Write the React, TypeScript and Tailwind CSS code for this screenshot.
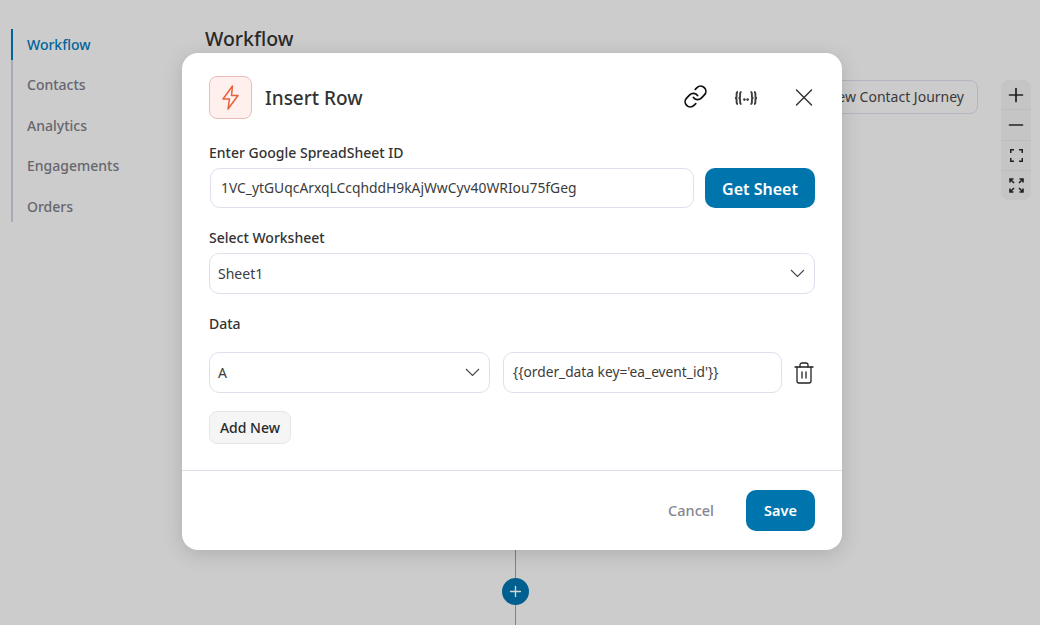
import React from "react";
import { Link, Minus, Plus, Trash2, X } from "lucide-react";

const font = { fontFamily: '"Noto Sans", "Open Sans", sans-serif' };

function Expand() {
  return (
    <svg width="13" height="13" viewBox="0 0 13 13" fill="none" stroke="#222" strokeWidth="1.5">
      <path d="M.75 4V.75H4M12.25 4V.75H9M.75 9v3.25H4M12.25 9v3.25H9" />
    </svg>
  );
}
function Collapse() {
  return (
    <svg width="15" height="15" viewBox="0 0 15 15" fill="none" stroke="#222" strokeWidth="1.6">
      <path d="M1 1l4 4M1 4.5V1h3.5M14 1l-4 4M10.5 1H14v3.5M1 14l4-4M1 10.5V14h3.5M14 14l-4-4M10.5 14H14v-3.5" />
    </svg>
  );
}
function Bolt() {
  return (
    <svg width="17" height="25" viewBox="0 0 17 25" fill="none" stroke="#e8603c" strokeWidth="1.5" strokeLinejoin="round">
      <path d="M10.5 1 1 14h6.5L6 24l10-13.5H9.5Z" />
    </svg>
  );
}
function Chevron() {
  return (
    <svg width="15" height="9" viewBox="0 0 15 9" fill="none" stroke="#444" strokeWidth="1.1">
      <path d="M1 1l6.5 6.5L14 1" />
    </svg>
  );
}
function VariableIcon() {
  return (
    <svg width="24" height="14" viewBox="0 0 24 14" fill="none" stroke="#3c3c3c" strokeWidth="1.9" className="ml-[25px] mr-[1px]">
      <path d="M4 1C2.6 1 2.6 2 2.6 3v2.5C2.6 6.5 1.8 7 1 7c.8 0 1.6.5 1.6 1.5V11c0 1 0 2 1.4 2" />
      <path d="M7.5 1C6.1 1 6.1 2 6.1 3v2.5c0 1-.8 1.5-1.6 1.5.8 0 1.6.5 1.6 1.5V11c0 1 0 2 1.4 2" />
      <path d="M20 1c1.4 0 1.4 1 1.4 2v2.5c0 1 .8 1.5 1.6 1.5-.8 0-1.6.5-1.6 1.5V11c0 1 0 2-1.4 2" />
      <path d="M16.5 1c1.4 0 1.4 1 1.4 2v2.5c0 1 .8 1.5 1.6 1.5-.8 0-1.6.5-1.6 1.5V11c0 1 0 2-1.4 2" />
      <circle cx="10.4" cy="8.6" r="1.3" fill="#3c3c3c" stroke="none" />
      <circle cx="13.6" cy="8.6" r="1.3" fill="#3c3c3c" stroke="none" />
    </svg>
  );
}

function Select({ label, className }: { label: string; className: string }) {
  return (
    <div className={`flex h-[41px] shrink-0 items-center justify-between rounded-[10px] border border-[#e0dfee] bg-white pl-2 pr-[9px] text-sm text-[#3c3c3c] ${className}`}>
      <span>{label}</span>
      <Chevron />
    </div>
  );
}

const nav = ["Contacts", "Analytics", "Engagements", "Orders"];

export default function App() {
  return (
    <div style={font} className="relative h-[625px] w-[1040px] overflow-hidden bg-[#cccccc]">
      <div className="flex h-full">
        <aside className="w-[205px] pl-[11px] pt-[29px]">
          <ul className="h-[193px] border-l-2 border-[#a9a9b3]">
            <li className="-ml-[2px] mb-[5px] flex h-[31px] items-center border-l-2 border-[#00649a] pl-[14px] text-sm font-medium text-[#00649a]">
              Workflow
            </li>
            {nav.map((n) => (
              <li key={n} className="flex h-[40.5px] items-center pl-[14px] text-sm font-medium text-[#66666f]">
                {n}
              </li>
            ))}
          </ul>
        </aside>
        <main className="relative flex-1 pt-[26px]">
          <h1 className="text-[19.5px] leading-[26px] font-medium text-[#2a2a2a]">Workflow</h1>
          <div className="mr-[62px] mt-[28px] flex justify-end">
            <button className="h-[34px] rounded-lg border border-[#b5b5c0] px-[13px] text-sm text-[#3a3a3a]">
              Create New Contact Journey
            </button>
          </div>
          <div className="absolute left-[796px] top-[80px] flex w-[30px] flex-col divide-y divide-[#bdbdbd] rounded-lg bg-[#c5c5c5]">
            <div className="flex h-[30px] items-center justify-center"><Plus size={22} color="#222" strokeWidth={1.9} /></div>
            <div className="flex h-[31px] items-center justify-center"><Minus size={22} color="#222" strokeWidth={1.9} /></div>
            <div className="flex h-[30px] items-center justify-center"><Expand /></div>
            <div className="flex h-[29px] items-center justify-center"><Collapse /></div>
          </div>
          <div className="absolute left-[310px] top-[540px] h-[85px] w-px bg-[#808080]" />
          <div className="absolute left-[296.5px] top-[578px] flex h-[27px] w-[27px] items-center justify-center rounded-full bg-[#005f8e]">
            <Plus size={17} color="#d6d6d6" strokeWidth={1.9} />
          </div>
        </main>
      </div>

      <div className="absolute left-[182px] top-[53px] w-[660px] rounded-[16px] bg-white shadow-[0_4px_20px_rgba(0,0,0,0.15)]">
        <div className="px-[27px] pt-[23px]">
          <div className="flex h-[43px] items-center">
            <div className="flex h-[43px] w-[43px] items-center justify-center rounded-lg border border-[#e8bdb8] bg-[#fff0ee]">
              <Bolt />
            </div>
            <div className="ml-[13px] mt-[2px] text-[19px] font-medium text-[#333]">Insert Row</div>
            <div className="ml-auto flex items-center">
              <Link size={25} color="#111" strokeWidth={1.7} className="-translate-x-px -translate-y-px" />
              <VariableIcon />
              <X size={30} color="#333" strokeWidth={1.1} className="-mr-[4px] ml-[30px] -translate-y-[0.5px]" />
            </div>
          </div>

          <label className="mt-6 block text-sm leading-5 font-medium text-[#333]">Enter Google SpreadSheet ID</label>
          <div className="mt-[5px] flex gap-[11px]">
            <div className="ml-px flex h-[40px] flex-1 items-center rounded-[10px] border border-[#e0dfee] pl-[10px] text-[13.85px] text-[#3c3c3c]">
              1VC_ytGUqcArxqLCcqhddH9kAjWwCyv40WRIou75fGeg
            </div>
            <button className="h-[40px] w-[110px] rounded-[10px] bg-[#0074ad] pt-px text-base font-semibold text-white">Get Sheet</button>
          </div>

          <label className="mt-5 block text-sm leading-5 font-medium text-[#333]">Select Worksheet</label>
          <Select label="Sheet1" className="mt-[5px]" />

          <label className="mt-5 block text-sm leading-5 font-medium text-[#333]">Data</label>
          <div className="mt-[18px] flex items-center">
            <Select label="A" className="w-[281px]" />
            <div className="ml-[13px] flex h-[41px] w-[279px] shrink-0 items-center rounded-[10px] border border-[#e0dfee] pl-[9px] text-[13.75px] text-[#3c3c3c]">
              {"{{order_data key='ea_event_id'}}"}
            </div>
            <Trash2 size={24} color="#222" strokeWidth={1.3} className="ml-[10px] shrink-0" />
          </div>
          <button className="mt-[18px] h-[33px] w-[82px] rounded-lg border border-[#e6e6ea] bg-[#f5f5f5] text-sm font-medium text-[#2a2a2a]">Add New</button>
        </div>
        <div className="mt-[26px] flex h-[80px] items-start justify-end gap-[32px] border-t border-[#e0dfe9] px-[27px] pt-[19px]">
          <button className="h-[41px] text-[14.5px] font-medium text-[#858592]">Cancel</button>
          <button className="h-[41px] w-[69px] rounded-[10px] bg-[#0074ad] text-[14.5px] font-semibold text-white">Save</button>
        </div>
      </div>
    </div>
  );
}
